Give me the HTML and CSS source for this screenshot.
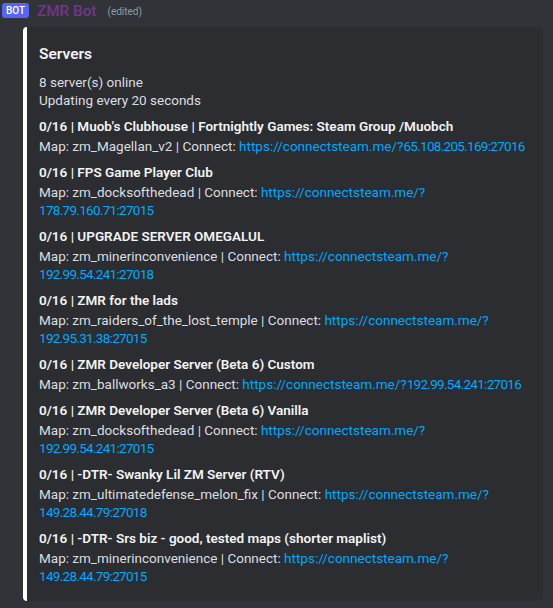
FILE: index.html
```html
<!DOCTYPE html>
<html>
<head>
<meta charset="utf-8">
<link rel="stylesheet" href="styles.css">
</head>
<body>
<div class="msg">
  <div class="header">
    <span class="bot-tag">BOT</span>
    <span class="username">ZMR Bot</span>
    <span class="edited">(edited)</span>
  </div>
  <article class="embed">
    <div class="title">Servers</div>
    <div class="desc">8 server(s) online<br>Updating every 20 seconds</div>
    <div class="fields">
      <div class="field">
        <div class="fname">0/16 | Muob's Clubhouse | Fortnightly Games: Steam Group /Muobch</div>
        <div class="fvalue one-line">Map: zm_Magellan_v2 | Connect: <a href="#">https://connectsteam.me/?<span class="ip">65.108.205.169:27016</span></a></div>
      </div>
      <div class="field">
        <div class="fname">0/16 | FPS Game Player Club</div>
        <div class="fvalue">Map: zm_docksofthedead | Connect: <a href="#">https://connectsteam.me/?<wbr><span class="ip">178.79.160.71:27015</span></a></div>
      </div>
      <div class="field">
        <div class="fname">0/16 | UPGRADE SERVER OMEGALUL</div>
        <div class="fvalue">Map: zm_minerinconvenience | Connect: <a href="#">https://connectsteam.me/?<wbr><span class="ip">192.99.54.241:27018</span></a></div>
      </div>
      <div class="field">
        <div class="fname">0/16 | ZMR for the lads</div>
        <div class="fvalue">Map: zm_raiders_of_the_lost_temple | Connect: <a href="#">https://connectsteam.me/?<wbr><span class="ip">192.95.31.38:27015</span></a></div>
      </div>
      <div class="field">
        <div class="fname">0/16 | ZMR Developer Server (Beta 6) Custom</div>
        <div class="fvalue one-line">Map: zm_ballworks_a3 | Connect: <a href="#">https://connectsteam.me/?<span class="ip">192.99.54.241:27016</span></a></div>
      </div>
      <div class="field">
        <div class="fname">0/16 | ZMR Developer Server (Beta 6) Vanilla</div>
        <div class="fvalue">Map: zm_docksofthedead | Connect: <a href="#">https://connectsteam.me/?<wbr><span class="ip">192.99.54.241:27015</span></a></div>
      </div>
      <div class="field">
        <div class="fname">0/16 | -DTR- Swanky Lil ZM Server (RTV)</div>
        <div class="fvalue">Map: zm_ultimatedefense_melon_fix | Connect: <a href="#">https://connectsteam.me/?<wbr><span class="ip">149.28.44.79:27018</span></a></div>
      </div>
      <div class="field">
        <div class="fname">0/16 | -DTR- Srs biz - good, tested maps (shorter maplist)</div>
        <div class="fvalue">Map: zm_minerinconvenience | Connect: <a href="#">https://connectsteam.me/?<wbr><span class="ip">149.28.44.79:27015</span></a></div>
      </div>
    </div>
  </article>
</div>
</body>
</html>
```
FILE: styles.css
```css
html, body {
  margin: 0;
  padding: 0;
  background: #313338;
}
body {
  font-family: Roboto, "Liberation Sans", sans-serif;
  color: #dbdee1;
}
.header {
  display: flex;
  align-items: center;
  height: 22px;
  padding-left: 2px;
}
.bot-tag {
  display: inline-flex;
  align-items: center;
  justify-content: center;
  width: 27px;
  height: 15px;
  background: #5865f2;
  color: #fff;
  font-size: 10px;
  font-weight: 500;
  border-radius: 3px;
  margin-top: -1px;
}
.username {
  margin-left: 8px;
  font-size: 15.3px;
  font-weight: 500;
  color: #71368a;
  line-height: 22px;
}
.edited {
  margin-left: 11px;
  font-size: 10px;
  color: #949ba4;
  line-height: 22px;
  margin-top: 2px;
}
.embed {
  margin-top: 5px;
  margin-left: 23px;
  width: 520px;
  box-sizing: border-box;
  background: #2b2d31;
  border-left: 4px solid #ffffff;
  border-radius: 4px;
  padding: 8px 12px 16px 12px;
}
.title {
  margin-top: 8px;
  font-size: 15.5px;
  line-height: 22px;
  font-weight: 600;
  color: #f2f3f5;
}
.desc {
  margin-top: 8px;
  font-size: 13.5px;
  line-height: 18px;
}
.fields {
  margin-top: 8px;
  display: flex;
  flex-direction: column;
  gap: 8px;
}
.fname {
  font-size: 13.5px;
  line-height: 18px;
  font-weight: 600;
  color: #f2f3f5;
  margin-bottom: 2px;
}
.fvalue {
  font-size: 13.5px;
  line-height: 18px;
}
.one-line {
  white-space: nowrap;
}
.fvalue a {
  color: #00a8fc;
  text-decoration: none;
}
.ip {
  letter-spacing: -0.7px;
}
```
